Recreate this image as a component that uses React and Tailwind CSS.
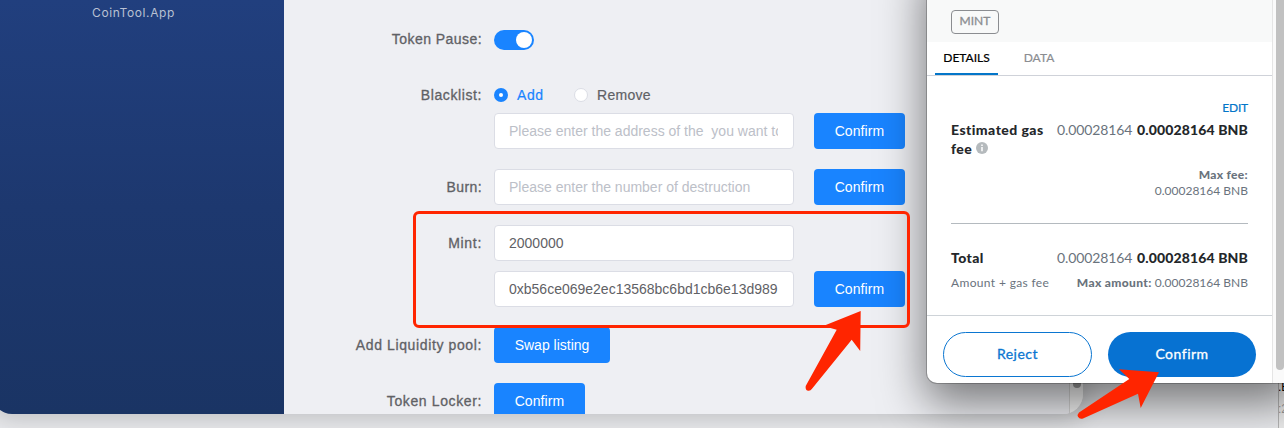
import React from "react";

function Label({ children, className = "" }) {
  return (
    <div className={`flex h-9 w-[198px] shrink-0 items-center justify-end whitespace-nowrap text-[14px] text-[#5f6165] [-webkit-text-stroke:0.3px_#5f6165] ${className}`}>
      {children}
    </div>
  );
}

function Field({ children, placeholder }) {
  return (
    <div className="flex h-9 w-[300px] shrink-0 items-center rounded border border-[#dbdde5] bg-white pr-[15px] pl-3.5 text-[14px]">
      <div className={`w-full overflow-hidden whitespace-pre ${placeholder ? "text-[#bcc0c8]" : "text-[#5f6165]"}`}>
        {children}
      </div>
    </div>
  );
}

function Button({ children, className = "w-[91px]" }) {
  return (
    <button className={`flex h-9 shrink-0 items-center justify-center whitespace-nowrap rounded bg-[#1984ff] text-[14px] text-white ${className}`}>
      {children}
    </button>
  );
}

function Form() {
  return (
    <main className="flex-1 bg-[#eeeff3] pt-[22px]">
      <div className="flex gap-3">
        <Label className="pb-0.5 tracking-[0.45px]">Token Pause:</Label>
        <div className="flex h-9 items-center">
          <div className="flex h-5 w-10 items-center justify-end rounded-full bg-[#1984ff] pr-0.5">
            <div className="size-4 rounded-full bg-white" />
          </div>
        </div>
      </div>
      <div className="mt-[19px] flex gap-3">
        <Label className="tracking-[0.6px]">Blacklist:</Label>
        <div className="flex h-9 items-center text-[14px]">
          <div className="flex size-3.5 items-center justify-center rounded-full bg-[#1984ff]">
            <div className="size-1 rounded-full bg-white" />
          </div>
          <span className="ml-[9px] w-[57px] tracking-[0.6px] text-[#1984ff] [-webkit-text-stroke:0.2px_#1984ff]">Add</span>
          <div className="size-3.5 rounded-full border border-[#dbdde5] bg-white" />
          <span className="ml-[9px] tracking-[0.3px] text-[#5f6165] [-webkit-text-stroke:0.2px_#5f6165]">Remove</span>
        </div>
      </div>
      <div className="flex pl-[210px]">
        <Field placeholder>Please enter the address of the  you want to blacklist</Field>
        <Button className="ml-5 w-[91px] tracking-[0.1px]">Confirm</Button>
      </div>
      <div className="mt-5 flex gap-3">
        <Label className="tracking-[0.4px]">Burn:</Label>
        <Field placeholder>Please enter the number of destruction</Field>
        <Button className="ml-2 w-[91px] tracking-[0.1px]">Confirm</Button>
      </div>
      <div className="mt-5 flex gap-3">
        <Label className="tracking-[0.7px]">Mint:</Label>
        <Field>2000000</Field>
      </div>
      <div className="mt-2.5 flex pl-[210px]">
        <Field>0xb56ce069e2ec13568bc6bd1cb6e13d989</Field>
        <Button className="ml-5 w-[91px] tracking-[0.1px]">Confirm</Button>
      </div>
      <div className="mt-5 flex gap-3">
        <Label className="tracking-[0.62px]">Add Liquidity pool:</Label>
        <Button className="w-[116px]">Swap listing</Button>
      </div>
      <div className="mt-5 flex gap-3">
        <Label className="tracking-[0.62px]">Token Locker:</Label>
        <Button className="w-[91px] tracking-[0.1px]">Confirm</Button>
      </div>
    </main>
  );
}

function Amounts() {
  return (
    <div className="flex gap-[5px] whitespace-nowrap text-[14px] leading-[19px]">
      <span className="w-[75px] tracking-[-0.1px] text-[#6a737d]">0.00028164</span>
      <span className="w-[111px] font-black tracking-[0.13px] text-[#24272a]">0.00028164 BNB</span>
    </div>
  );
}

function Wallet() {
  return (
    <section className="absolute top-[-40px] left-[927px] flex h-[423px] w-[370px] rounded-b-[10px] bg-white pt-10 font-[Lato,sans-serif] shadow-[0_0_0_1px_rgba(0,0,0,0.22),0_18px_45px_2px_rgba(0,0,0,0.5)] [font-variant-ligatures:none]">
      <div className="w-[345px]">
        <div className="h-[42px] bg-[#f8f9f9] pt-2.5 pl-6">
          <div className="flex h-6 w-12 items-center justify-center rounded border border-[#8b8d91] pb-0.5 text-[12px] text-[#8b8d91] [-webkit-text-stroke:0.3px_#8b8d91]">MINT</div>
        </div>
        <div className="flex h-[34px] border-b border-[#cfd2d9] pl-2 text-[12px]">
          <div className="flex h-[33px] w-[63px] items-center justify-center border-b-2 border-[#0376c9] text-black [-webkit-text-stroke:0.2px_black]">DETAILS</div>
          <div className="flex h-[33px] w-[82px] items-center justify-center pb-0.5 text-[#8b8d91] [-webkit-text-stroke:0.2px_#8b8d91]">DATA</div>
        </div>
        <div className="h-[239px] px-6 pt-[23px]">
          <div className="flex h-[21px] justify-end text-[12px] leading-[18px] tracking-[-0.2px] text-[#0376c9] [-webkit-text-stroke:0.2px_#0376c9]">EDIT</div>
          <div className="flex justify-between">
            <div className="text-[14px] leading-[19px] font-black tracking-[0.45px] whitespace-nowrap text-[#24272a]">
              Estimated gas
              <div className="flex items-center gap-1">
                fee
                <svg className="mt-[-1px] size-3" viewBox="0 0 12 12">
                  <circle cx="6" cy="6" r="6" fill="#b5babd" />
                  <path d="M6 5v4.3M6 2.4v1.5" stroke="white" strokeWidth="1.5" />
                </svg>
              </div>
            </div>
            <Amounts />
          </div>
          <div className="mt-[9px] text-right text-[12px] leading-4 text-[#6a737d]">
            <div className="font-black tracking-[0.3px]">Max fee:</div>
            <div>0.00028164 BNB</div>
          </div>
          <div className="mt-6 flex justify-between border-t border-[#b4babf] pt-6">
            <span className="text-[14px] leading-[19px] font-black tracking-[0.4px] text-[#24272a]">Total</span>
            <Amounts />
          </div>
          <div className="mt-2 flex justify-between text-[12px] leading-4 whitespace-nowrap text-[#6a737d]">
            <span className="tracking-[0.35px]">Amount + gas fee</span>
            <span><b className="font-black tracking-[0.35px]">Max amount:</b> 0.00028164 BNB</span>
          </div>
        </div>
        <div className="flex gap-4 border-t border-[#ced3d8] px-4 pt-4 text-[14px]">
          <button className="flex h-[45px] w-[149px] items-center justify-center rounded-full border border-[#0b76d1] pb-0.5 tracking-[0.5px] text-[#0b76d1] [-webkit-text-stroke:0.3px_#0b76d1]">Reject</button>
          <button className="flex h-[45px] w-[148px] items-center justify-center rounded-full bg-[#0772d2] pb-0.5 tracking-[0.5px] text-white [-webkit-text-stroke:0.3px_white]">Confirm</button>
        </div>
      </div>
      <div className="w-3 border-l border-[#e5e5e5] bg-[#fafafa] pl-[3px]">
        <div className="h-[370px] w-2 rounded-b-full bg-[#c1c1c1]" />
      </div>
    </section>
  );
}

export default function App() {
  return (
    <div className="relative h-[428px] w-[1284px] overflow-hidden bg-[#eaebee] font-['Liberation_Sans',Arial,sans-serif]">
      <div className="-ml-2 flex h-[414px] w-[1091px] overflow-hidden rounded-b-[20px] shadow-[0_2px_24px_4px_rgba(0,0,0,0.18)]">
        <aside className="w-[292px] bg-linear-to-b from-[#213f7e] via-[#1d386f] to-[#1a3464] pt-1 text-center">
          <div className="pr-[9px] font-[Inter,sans-serif] text-[12px] leading-[18px] tracking-[0.6px] text-[#b9c1d3]">CoinTool.App</div>
        </aside>
        <Form />
        <div className="flex w-3.5 justify-center border-l border-[#d5d5d5] bg-[#f7f7f7]">
          <div className="h-[388px] w-2 rounded-b-full bg-[#9d9d9d]" />
        </div>
      </div>
      <div className="absolute top-[370px] left-[1278px] h-[60px] w-5 overflow-hidden border-l border-[#b5b5b5] bg-[#ececec] text-[12px]">
        <div className="mt-2 ml-[-1px] text-black">.E</div>
        <div className="mt-1 ml-[-1px] text-[#9a9a9a]">:2</div>
      </div>
      <Wallet />
      <div className="absolute top-[211px] left-[413px] h-[117px] w-[497px] rounded-md border-3 border-[#ff2500]" />
      <svg className="absolute inset-0" width="1284" height="428" viewBox="0 0 1284 428" fill="#ff2500">
        <path d="M860.7 311L823.3 326L836.7 329.7L805.7 386Q805 390.5 808.5 390.8Q810.5 391 812 388.8L851.7 339.7L860.2 351Z" />
        <path d="M1159 372.3L1119 369.2L1129.3 379L1079 412.5Q1077 414.5 1078 416.8Q1079.5 419.5 1083 418.5L1138 393.7L1140.7 408Z" />
      </svg>
    </div>
  );
}
